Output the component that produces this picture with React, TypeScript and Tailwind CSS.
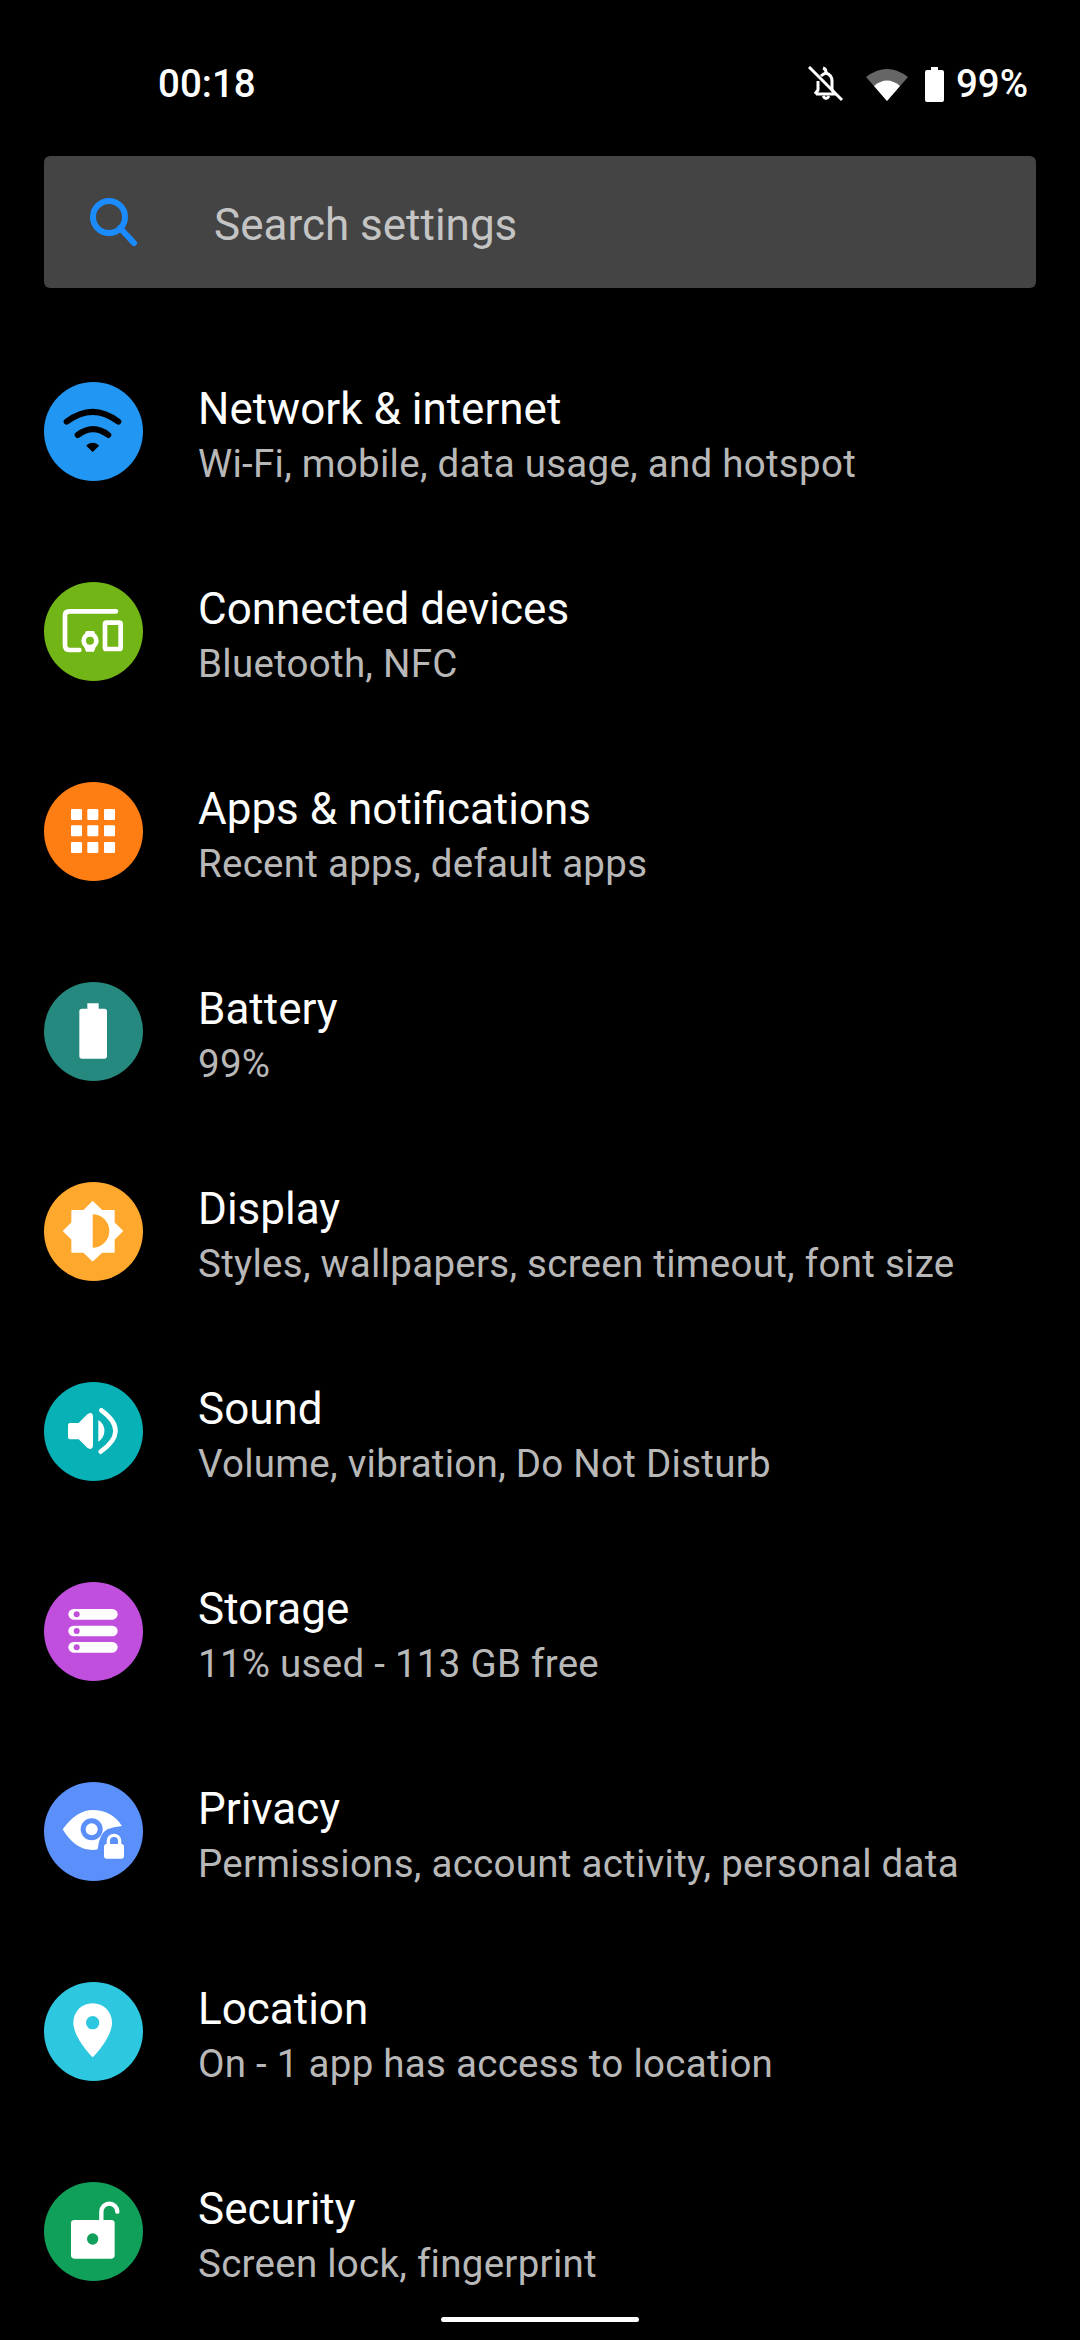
import React from "react";

const Ico = ({ bg, children }: { bg: string; children: React.ReactNode }) => (
  <div className={`w-[99px] h-[99px] rounded-full shrink-0 ${bg}`}>
    <svg viewBox="42 36 297 297" className="w-full h-full block">{children}</svg>
  </div>
);

const Wifi = () => (
  <Ico bg="bg-[#2196f3]">
    <g fill="none" stroke="#000" strokeWidth="18" strokeLinecap="round">
      <path d="M110 155Q188 96 265 155" />
      <path d="M143 195Q190 160 235 195" />
    </g>
    <path d="M172 227Q188 215 204 227L188 243Z" fill="#000" stroke="#000" strokeWidth="5" strokeLinejoin="round" />
  </Ico>
);

const Devices = () => (
  <Ico bg="bg-[#72b516]">
    <g fill="none" stroke="#fff" strokeWidth="14" strokeLinecap="round" strokeLinejoin="round">
      <path d="M258 124H118Q105 124 105 136V226Q105 240 118 240H148" />
      <rect x="225" y="158" width="47" height="79" rx="4" />
    </g>
    <path d="M168 183H192L198 197V228L192 245H168L162 228V197Z" fill="#fff" />
    <circle cx="180" cy="212" r="26" fill="#fff" />
    <circle cx="180" cy="212" r="12" fill="#72b516" />
  </Ico>
);

const Apps = () => (
  <Ico bg="bg-[#ff7e14]">
    <g fill="#fff">
      {[117, 166, 216].map((y) =>
        [123, 172, 222].map((x) => <rect key={`${x}-${y}`} x={x} y={y} width="33" height="33" rx="3" />)
      )}
    </g>
  </Ico>
);

const Battery = () => (
  <Ico bg="bg-[#25897f]">
    <path d="M172 100H206V116H223Q231 116 231 124V258Q231 266 223 266H156Q148 266 148 258V124Q148 116 156 116H172Z" fill="#fff" />
  </Ico>
);

const Display = () => (
  <Ico bg="bg-[#ffa82e]">
    <path
      d="M188 95L216 122H252V158L277 183L252 208V246H216L188 272L161 246H126V208L101 183L126 158V122H161Z"
      fill="#fff"
      stroke="#fff"
      strokeWidth="4"
      strokeLinejoin="round"
    />
    <path d="M188 133A50 50 0 0 1 188 233Z" fill="#ffa82e" />
  </Ico>
);

const Sound = () => (
  <Ico bg="bg-[#08b1b5]">
    <path d="M114 165V202Q114 208 120 208H146L172 233Q188 243 189 226V140Q188 122 172 133L146 159H120Q114 159 114 165Z" fill="#fff" />
    <path d="M205 150A38 38 0 0 1 205 215Z" fill="#fff" />
    <path d="M214 121Q300 183 212 245" fill="none" stroke="#fff" strokeWidth="14" strokeLinecap="round" />
  </Ico>
);

const Storage = () => (
  <Ico bg="bg-[#c04fdd]">
    {[117, 167, 216].map((y) => (
      <g key={y}>
        <rect x="115" y={y} width="148" height="32" rx="16" fill="#fff" />
        <circle cx="140" cy={y + 16} r="9" fill="#c04fdd" />
      </g>
    ))}
  </Ico>
);

const Privacy = () => (
  <Ico bg="bg-[#5b8ff9]">
    <path d="M98 178Q140 120 188 120Q245 120 276 168Q250 170 232 178Q208 190 203 238Q195 240 188 240Q135 240 98 178Z" fill="#fff" />
    <circle cx="185" cy="178" r="33" fill="#5b8ff9" />
    <circle cx="185" cy="178" r="18" fill="#fff" />
    <rect x="222" y="222" width="60" height="44" rx="8" fill="#fff" />
    <path d="M235 226V213A17 17 0 0 1 269 213V226" fill="none" stroke="#fff" strokeWidth="10" />
  </Ico>
);

const Location = () => (
  <Ico bg="bg-[#2ec7e0]">
    <path d="M188 100C155 100 130 125 130 158C130 200 180 255 188 262C196 255 246 200 246 158C246 125 221 100 188 100Z" fill="#fff" />
    <circle cx="188" cy="158" r="20" fill="#2ec7e0" />
  </Ico>
);

const Security = () => (
  <Ico bg="bg-[#11a05a]">
    <rect x="123" y="150" width="131" height="116" rx="10" fill="#fff" />
    <circle cx="188" cy="207" r="17" fill="#11a05a" />
    <path d="M214 152V125A24 24 0 0 1 262 125" fill="none" stroke="#fff" strokeWidth="13" strokeLinecap="round" />
  </Ico>
);

const rows: { icon: React.ReactNode; title: string; sub: string }[] = [
  { icon: <Wifi />, title: "Network & internet", sub: "Wi-Fi, mobile, data usage, and hotspot" },
  { icon: <Devices />, title: "Connected devices", sub: "Bluetooth, NFC" },
  { icon: <Apps />, title: "Apps & notifications", sub: "Recent apps, default apps" },
  { icon: <Battery />, title: "Battery", sub: "99%" },
  { icon: <Display />, title: "Display", sub: "Styles, wallpapers, screen timeout, font size" },
  { icon: <Sound />, title: "Sound", sub: "Volume, vibration, Do Not Disturb" },
  { icon: <Storage />, title: "Storage", sub: "11% used - 113 GB free" },
  { icon: <Privacy />, title: "Privacy", sub: "Permissions, account activity, personal data" },
  { icon: <Location />, title: "Location", sub: "On - 1 app has access to location" },
  { icon: <Security />, title: "Security", sub: "Screen lock, fingerprint" },
];

export default function App() {
  return (
    <div className="relative w-[1080px] h-[2340px] bg-black overflow-hidden font-['Roboto',sans-serif] text-white">
      <div className="h-[56px] mt-[56px] flex items-center pl-[158px] pr-[52px] justify-between">
        <span className="text-[38.5px] leading-none font-medium">00:18</span>
        <div className="flex items-center">
          <svg viewBox="0 0 36 36" className="w-[36px] h-[36px] block">
            <path d="M8 28H27L24 24V15C24 10 21 8 18 7C15 8 14 9 13 10M10 15V24L7 28" fill="none" stroke="#fff" strokeWidth="3" strokeLinejoin="round" />
            <path d="M15 2Q18 3 18 6M15 30Q18 35 21 30" fill="none" stroke="#fff" strokeWidth="3" />
            <path d="M1 1L34 34" stroke="#fff" strokeWidth="3" />
          </svg>
          <svg viewBox="0 0 42 34" className="w-[42px] h-[34px] block ml-[22px]">
            <path d="M0 10Q21 -6 42 10L21 34Z" fill="#666" />
            <path d="M8 19Q21 8 34 19L21 34Z" fill="#fff" />
          </svg>
          <svg viewBox="0 0 19 35" className="w-[19px] h-[35px] block ml-[17px]">
            <path d="M6 0H13V3H17Q19 3 19 5V33Q19 35 17 35H2Q0 35 0 33V5Q0 3 2 3H6Z" fill="#fff" />
          </svg>
          <span className="text-[38.5px] leading-none font-medium ml-[12px]">99%</span>
        </div>
      </div>

      <div className="mt-[44px] mx-[44px] h-[132px] rounded-[6px] bg-[#444444] flex items-center">
        <svg viewBox="0 0 50 50" className="w-[50px] h-[50px] ml-[45px] block">
          <circle cx="20" cy="20" r="16" fill="none" stroke="#1a8cff" strokeWidth="6" />
          <path d="M31 31L45 46" stroke="#1a8cff" strokeWidth="6" strokeLinecap="round" />
        </svg>
        <span className="ml-[75px] pt-[6px] text-[44px] leading-none text-[#c4c4c4]">Search settings</span>
      </div>

      <div className="mt-[43px]">
        {rows.map((r) => (
          <div key={r.title} className="h-[200px] flex items-center pl-[44px]">
            {r.icon}
            <div className="ml-[55px] pt-[12px] pb-[2px]">
              <div className="text-[44px] leading-[56px] text-white">{r.title}</div>
              <div className="text-[38.5px] leading-[54px] tracking-[0.27px] text-[#b8b8b8]">{r.sub}</div>
            </div>
          </div>
        ))}
      </div>

      <div className="absolute left-[441px] top-[2317px] w-[198px] h-[5px] rounded-full bg-white" />
    </div>
  );
}
